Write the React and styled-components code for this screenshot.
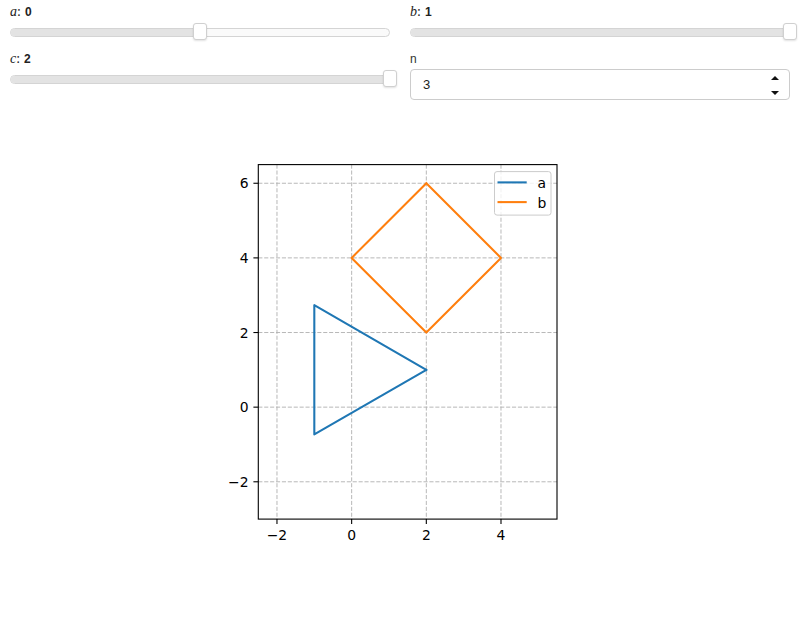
import React from "react";
import styled, { createGlobalStyle } from "styled-components";

const GlobalStyle = createGlobalStyle`
  html, body { margin: 0; padding: 0; background: #fff; }
  body { font-family: "Liberation Sans", Arial, sans-serif; color: #333; }
`;

const Page = styled.div`
  padding: 4px 10px 0;
`;

const Controls = styled.div`
  display: grid;
  grid-template-columns: 1fr 1fr;
  column-gap: 20px;
  row-gap: 9px;
  align-items: start;
`;

const Widget = styled.div`
  display: flex;
  flex-direction: column;
  gap: 2px;
`;

const Label = styled.div`
  height: 16px;
  line-height: 16px;
  font-size: 12px;
  color: #333;
  display: flex;
  align-items: baseline;
`;

const MathVar = styled.span`
  font-family: "Liberation Serif", "DejaVu Serif", serif;
  font-style: italic;
  font-size: 14px;
  color: #222;
`;

const Colon = styled.span`
  font-family: "Liberation Serif", "DejaVu Serif", serif;
  font-size: 14px;
  color: #222;
  margin-right: 4px;
`;

const Value = styled.span`
  font-weight: bold;
  font-size: 12px;
  color: #222;
`;

const SliderBox = styled.div`
  position: relative;
  height: 20px;
  display: flex;
  align-items: center;
`;

const Track = styled.div`
  width: 100%;
  height: 9px;
  box-sizing: border-box;
  border-radius: 5px;
  background: #fafafa;
  border: 1px solid #d4d4d4;
  overflow: hidden;
`;

const Fill = styled.div`
  height: 100%;
  background: #e3e3e3;
`;

const Thumb = styled.div`
  position: absolute;
  top: 1px;
  width: 14px;
  height: 17px;
  box-sizing: border-box;
  background: #fff;
  border: 1px solid #d0d0d0;
  border-radius: 3px;
  box-shadow: 0 1px 2px rgba(0, 0, 0, 0.12);
`;

const NumberBox = styled.div`
  height: 31px;
  box-sizing: border-box;
  border: 1px solid #cccccc;
  border-radius: 4px;
  display: flex;
  align-items: center;
  justify-content: space-between;
  padding: 0 9px 0 12px;
  font-size: 13px;
  color: #222;
`;

const FigureWrap = styled.div`
  display: flex;
  justify-content: center;
  margin-top: 20px;
`;

function Slider({ name, value, frac }) {
  const pct = frac * 100;
  return (
    <Widget>
      <Label>
        <MathVar>{name}</MathVar>
        <Colon>:</Colon>
        <Value>{value}</Value>
      </Label>
      <SliderBox>
        <Track>
          <Fill style={{ width: `${pct}%` }} />
        </Track>
        <Thumb style={{ left: `calc(${pct}% - 7px)` }} />
      </SliderBox>
    </Widget>
  );
}

function NumberInput({ label, value }) {
  return (
    <Widget>
      <Label>{label}</Label>
      <NumberBox>
        <span>{value}</span>
        <svg width="10" height="22" viewBox="0 0 10 22">
          <path d="M1 6 L5 2 L9 6 Z" fill="#111" />
          <path d="M1 17 L9 17 L5 21 Z" fill="#111" />
        </svg>
      </NumberBox>
    </Widget>
  );
}

const AX_L = 258.3;
const AX_R = 557;
const AX_T = 164;
const AX_B = 518.5;
const X = (x) => AX_L + ((x + 2.5) * (AX_R - AX_L)) / 8;
const Y = (y) => AX_T + ((6.5 - y) * (AX_B - AX_T)) / 9.5;

const pts = (arr) => arr.map(([x, y]) => `${X(x).toFixed(2)},${Y(y).toFixed(2)}`).join(" ");

const s3 = Math.sqrt(3);
const tri = [[2, 1], [-1, 1 + s3], [-1, 1 - s3], [2, 1]];
const dia = [[2, 6], [4, 4], [2, 2], [0, 4], [2, 6]];

const xticks = [-2, 0, 2, 4];
const yticks = [-2, 0, 2, 4, 6];
const fmt = (v) => (v < 0 ? `\u2212${-v}` : `${v}`);

const TEXT_FONT = '"DejaVu Sans", sans-serif';

function Plot() {
  return (
    <svg width="400" height="440" viewBox="200 119.4 400 440">
      <defs>
        <clipPath id="axclip">
          <rect x={AX_L} y={AX_T} width={AX_R - AX_L} height={AX_B - AX_T} />
        </clipPath>
      </defs>
      <rect x={AX_L} y={AX_T} width={AX_R - AX_L} height={AX_B - AX_T} fill="#fff" />
      {xticks.map((t) => (
        <line key={"gx" + t} x1={X(t)} x2={X(t)} y1={AX_T} y2={AX_B} stroke="#b0b0b0" strokeWidth="0.9" strokeDasharray="4.1 1.8" />
      ))}
      {yticks.map((t) => (
        <line key={"gy" + t} x1={AX_L} x2={AX_R} y1={Y(t)} y2={Y(t)} stroke="#b0b0b0" strokeWidth="0.9" strokeDasharray="4.1 1.8" />
      ))}
      <g clipPath="url(#axclip)" fill="none" strokeWidth="2.08" strokeLinejoin="round" strokeLinecap="square">
        <polyline points={pts(tri)} stroke="#1f77b4" />
        <polyline points={pts(dia)} stroke="#ff7f0e" />
      </g>
      <rect x={AX_L} y={AX_T} width={AX_R - AX_L} height={AX_B - AX_T} fill="none" stroke="#000" strokeWidth="1.1" />
      {xticks.map((t) => (
        <g key={"tx" + t}>
          <line x1={X(t)} x2={X(t)} y1={AX_B} y2={AX_B + 4.9} stroke="#000" strokeWidth="1.1" />
          <text x={X(t)} y={539} textAnchor="middle" fontFamily={TEXT_FONT} fontSize="13.9" fill="#000">
            {fmt(t)}
          </text>
        </g>
      ))}
      {yticks.map((t) => (
        <g key={"ty" + t}>
          <line x1={AX_L - 4.9} x2={AX_L} y1={Y(t)} y2={Y(t)} stroke="#000" strokeWidth="1.1" />
          <text x={AX_L - 9.8} y={Y(t) + 5} textAnchor="end" fontFamily={TEXT_FONT} fontSize="13.9" fill="#000">
            {fmt(t)}
          </text>
        </g>
      ))}
      <rect x="494.5" y="171" width="56.5" height="43.5" rx="2.5" fill="rgba(255,255,255,0.8)" stroke="#cccccc" strokeWidth="1" />
      <line x1="497.5" x2="526.7" y1="181.8" y2="181.8" stroke="#1f77b4" strokeWidth="2.08" />
      <line x1="497.5" x2="526.7" y1="201.5" y2="201.5" stroke="#ff7f0e" strokeWidth="2.08" />
      <text x="537.5" y="187" fontFamily={TEXT_FONT} fontSize="13.9" fill="#000">a</text>
      <text x="537.5" y="207" fontFamily={TEXT_FONT} fontSize="13.9" fill="#000">b</text>
    </svg>
  );
}

export default function App() {
  return (
    <>
      <GlobalStyle />
      <Page>
        <Controls>
          <Slider name="a" value="0" frac={0.5} />
          <Slider name="b" value="1" frac={1} />
          <Slider name="c" value="2" frac={1} />
          <NumberInput label="n" value="3" />
        </Controls>
        <FigureWrap>
          <Plot />
        </FigureWrap>
      </Page>
    </>
  );
}
